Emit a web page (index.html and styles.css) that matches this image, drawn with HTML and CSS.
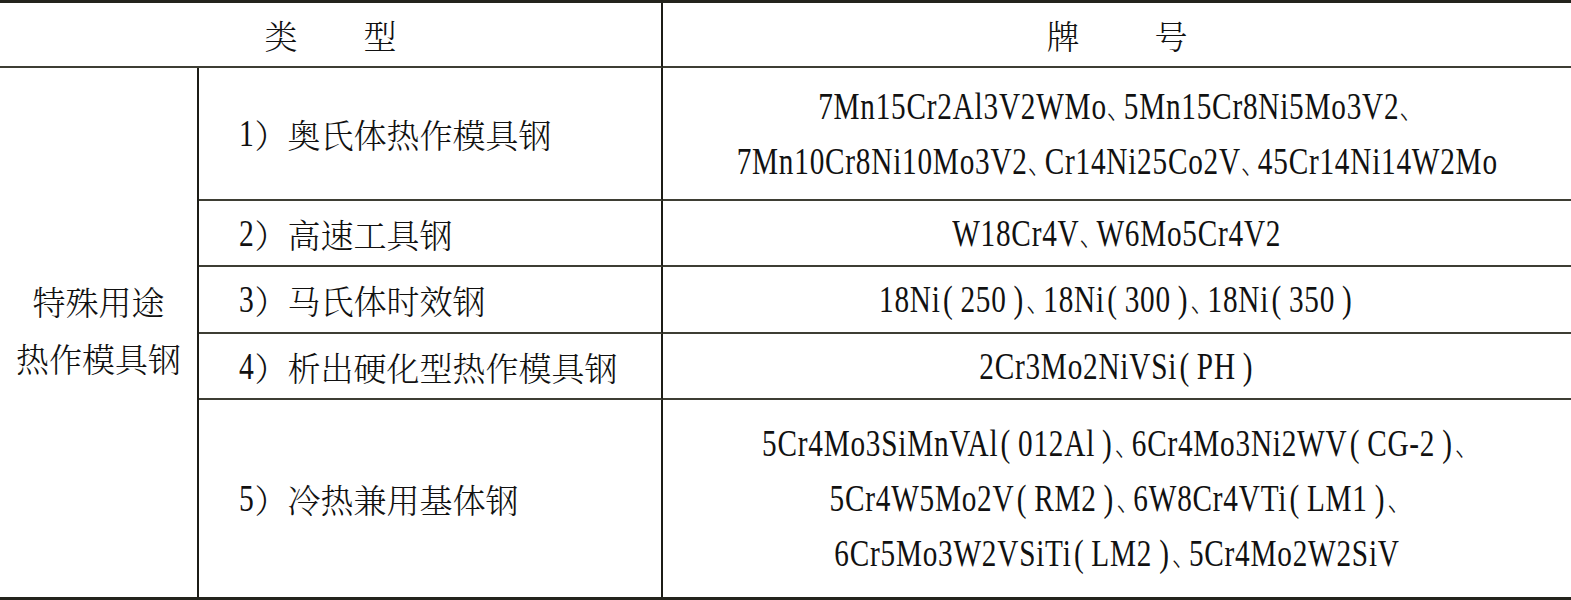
FILE: index.html
```html
<!DOCTYPE html>
<html lang="zh-CN">
<head>
<meta charset="utf-8">
<title>特殊用途热作模具钢</title>
<link rel="stylesheet" href="styles.css">
</head>
<body>
<div class="table">
  <div class="cell head span2"><span>类</span><span class="gap-a"></span><span>型</span></div>
  <div class="cell head last"><span>牌</span><span class="gap-b"></span><span>号</span></div>

  <div class="cell side">特殊用途<br>热作模具钢</div>

  <div class="cell type"><span class="num">1</span>）奥氏体热作模具钢</div>
  <div class="cell grade"><span class="lat">7Mn15Cr2Al3V2WMo<span class="dun">、</span>5Mn15Cr8Ni5Mo3V2<span class="dun">、</span><br>7Mn10Cr8Ni10Mo3V2<span class="dun">、</span>Cr14Ni25Co2V<span class="dun">、</span>45Cr14Ni14W2Mo</span></div>

  <div class="cell type"><span class="num">2</span>）高速工具钢</div>
  <div class="cell grade"><span class="lat">W18Cr4V<span class="dun">、</span>W6Mo5Cr4V2</span></div>

  <div class="cell type"><span class="num">3</span>）马氏体时效钢</div>
  <div class="cell grade"><span class="lat">18Ni<span class="po">(</span>250<span class="pc">)</span><span class="dun">、</span>18Ni<span class="po">(</span>300<span class="pc">)</span><span class="dun">、</span>18Ni<span class="po">(</span>350<span class="pc">)</span></span></div>

  <div class="cell type"><span class="num">4</span>）析出硬化型热作模具钢</div>
  <div class="cell grade"><span class="lat">2Cr3Mo2NiVSi<span class="po">(</span>PH<span class="pc">)</span></span></div>

  <div class="cell type end"><span class="num">5</span>）冷热兼用基体钢</div>
  <div class="cell grade end"><span class="lat">5Cr4Mo3SiMnVAl<span class="po">(</span>012Al<span class="pc">)</span><span class="dun">、</span>6Cr4Mo3Ni2WV<span class="po">(</span>CG-2<span class="pc">)</span><span class="dun">、</span><br>5Cr4W5Mo2V<span class="po">(</span>RM2<span class="pc">)</span><span class="dun">、</span>6W8Cr4VTi<span class="po">(</span>LM1<span class="pc">)</span><span class="dun">、</span><br>6Cr5Mo3W2VSiTi<span class="po">(</span>LM2<span class="pc">)</span><span class="dun">、</span>5Cr4Mo2W2SiV</span></div>
</div>
</body>
</html>
```

FILE: styles.css
```css
html, body {
  margin: 0;
  padding: 0;
  background: #ffffff;
}

body {
  width: 1571px;
  height: 600px;
  overflow: hidden;
  font-family: "Noto Serif CJK SC", "Noto Sans CJK SC", "Noto Sans CJK JP", sans-serif;
  font-weight: 300;
  color: #111111;
}

.table {
  box-sizing: border-box;
  width: 1571px;
  height: 600px;
  border-top: 3px solid #23231c;
  border-bottom: 3px solid #23231c;
  display: grid;
  grid-template-columns: 199px 464px minmax(0, 1fr);
  grid-template-rows: 65px 133px 66px 67px 66px 1fr;
}

.cell {
  box-sizing: border-box;
  min-width: 0;
  display: flex;
  align-items: center;
  font-size: 33px;
  border-bottom: 2px solid #3e3e34;
}

.cell.end {
  border-bottom: none;
}

.head {
  justify-content: center;
  line-height: 1;
}

.head.span2 {
  grid-column: 1 / 3;
  border-right: 2px solid #1c1c16;
}

.gap-a {
  display: inline-block;
  width: 66px;
}

.gap-b {
  display: inline-block;
  width: 75px;
}

.side {
  grid-column: 1;
  grid-row: 2 / 7;
  border-right: 2px solid #1c1c16;
  border-bottom: none;
  justify-content: center;
  text-align: center;
  line-height: 57px;
  padding-bottom: 8px;
}

.type {
  grid-column: 2;
  border-right: 2px solid #1c1c16;
  padding-left: 40px;
  line-height: 1;
}

.num {
  display: inline-block;
  font-family: "Liberation Serif", "Times New Roman", serif;
  font-size: 37px;
  font-weight: 400;
  transform: scaleX(0.8);
  transform-origin: left center;
  margin-right: -3px;
}

.grade {
  grid-column: 3;
  justify-content: center;
  text-align: center;
  overflow: visible;
}

.lat {
  display: inline-block;
  flex: none;
  font-family: "Liberation Serif", "Times New Roman", serif;
  font-weight: 400;
  font-size: 38px;
  letter-spacing: 1px;
  line-height: 55px;
  transform: scaleX(0.77);
  transform-origin: center;
  white-space: nowrap;
}

.po {
  padding: 0 9px 0 3px;
}

.pc {
  padding: 0 3px 0 9px;
}

.dun {
  font-family: "Noto Sans CJK SC", sans-serif;
  font-weight: 300;
  font-size: 30px;
  letter-spacing: -8px;
}
```
